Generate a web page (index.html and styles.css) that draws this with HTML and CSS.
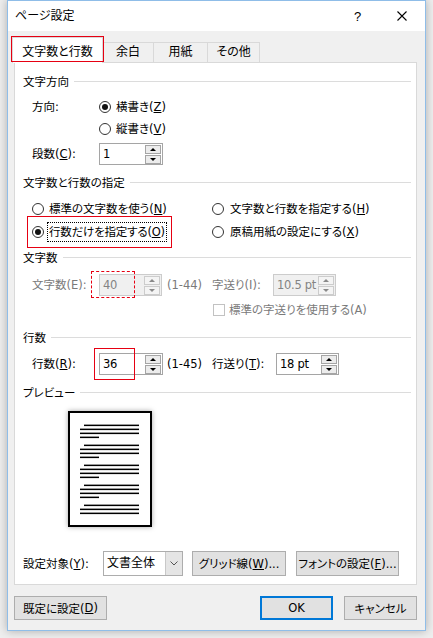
FILE: index.html
```html
<!DOCTYPE html>
<html lang="ja">
<head>
<meta charset="utf-8">
<title>ページ設定</title>
<link rel="stylesheet" href="styles.css">
</head>
<body>
<div class="window">
  <div class="titlebar">
    <span class="title">ページ設定</span>
    <span class="cap help">?</span>
    <span class="cap close"><svg width="10" height="10" viewBox="0 0 10 10"><path d="M0.5 0.5L9.5 9.5M9.5 0.5L0.5 9.5" stroke="#000" stroke-width="1.1" fill="none"/></svg></span>
  </div>
  <div class="client">
    <div class="tabs">
      <div class="tab sel w-a">文字数と行数</div>
      <div class="tab w-b">余白</div>
      <div class="tab w-c">用紙</div>
      <div class="tab w-d">その他</div>
    </div>
    <div class="panel">
      <div class="ghead g1"><span>文字方向</span><i class="rule"></i></div>
      <div class="row r-dir">
        <span class="lbl">方向:</span>
        <span class="radio on"></span><span>横書き(<u>Z</u>)</span>
      </div>
      <div class="row r-vert">
        <span class="radio"></span><span>縦書き(<u>V</u>)</span>
      </div>
      <div class="row r-cols">
        <span class="lbl">段数(<u>C</u>):</span>
        <div class="spin w64"><span class="val">1</span><span class="btns"><span class="up"></span><span class="dn"></span></span></div>
      </div>

      <div class="ghead g2"><span>文字数と行数の指定</span><i class="rule"></i></div>
      <div class="row r-opt1">
        <div class="col1"><span class="radio"></span><span>標準の文字数を使う(<u>N</u>)</span></div>
        <div class="col2"><span class="radio"></span><span>文字数と行数を指定する(<u>H</u>)</span></div>
      </div>
      <div class="row r-opt2">
        <div class="col1"><span class="radio on tight"></span><span class="focus">行数だけを指定する(<u>O</u>)</span></div>
        <div class="col2"><span class="radio"></span><span>原稿用紙の設定にする(<u>X</u>)</span></div>
      </div>

      <div class="ghead g3"><span>文字数</span><i class="rule"></i></div>
      <div class="row r-chars dis">
        <span class="lbl">文字数(E):</span>
        <div class="spin off w63"><span class="val">40</span><span class="btns"><span class="up"></span><span class="dn"></span></span></div>
        <span class="range m5">(1-44)</span>
        <span class="lbl2 w61">字送り(I):</span>
        <div class="spin off w63"><span class="val">10.5 pt</span><span class="btns"><span class="up"></span><span class="dn"></span></span></div>
      </div>
      <div class="row r-check dis">
        <span class="check"></span><span>標準の字送りを使用する(A)</span>
      </div>

      <div class="ghead g4"><span>行数</span><i class="rule"></i></div>
      <div class="row r-lines">
        <span class="lbl">行数(<u>R</u>):</span>
        <div class="spin w64"><span class="val">36</span><span class="btns"><span class="up"></span><span class="dn"></span></span></div>
        <span class="range m4">(1-45)</span>
        <span class="lbl2 w64">行送り(<u>T</u>):</span>
        <div class="spin w63"><span class="val">18 pt</span><span class="btns"><span class="up"></span><span class="dn"></span></span></div>
      </div>

      <div class="ghead g5"><span>プレビュー</span><i class="rule"></i></div>
      <div class="preview">
        <div class="page">
          <svg width="80" height="112" viewBox="0 0 80 112">
            <g fill="#000">
              <rect x="14" y="11.6" width="55" height="1.5"/>
              <rect x="10" y="15.6" width="59" height="1.5"/>
              <rect x="10" y="19.6" width="59" height="1.5"/>
              <rect x="10" y="23.6" width="19" height="1.5"/>
              <rect x="14" y="31.6" width="55" height="1.5"/>
              <rect x="10" y="35.6" width="59" height="1.5"/>
              <rect x="10" y="39.6" width="59" height="1.5"/>
              <rect x="10" y="43.6" width="19" height="1.5"/>
              <rect x="14" y="51.6" width="55" height="1.5"/>
              <rect x="10" y="55.6" width="59" height="1.5"/>
              <rect x="10" y="59.6" width="59" height="1.5"/>
              <rect x="10" y="63.6" width="19" height="1.5"/>
              <rect x="14" y="71.6" width="55" height="1.5"/>
              <rect x="10" y="75.6" width="59" height="1.5"/>
              <rect x="10" y="79.6" width="59" height="1.5"/>
              <rect x="10" y="83.6" width="19" height="1.5"/>
              <rect x="14" y="91.6" width="55" height="1.5"/>
              <rect x="10" y="95.6" width="59" height="1.5"/>
              <rect x="10" y="99.6" width="59" height="1.5"/>
            </g>
          </svg>
        </div>
      </div>

      <div class="row r-apply">
        <span class="lbl3">設定対象(<u>Y</u>):</span>
        <div class="combo"><span class="val">文書全体</span><span class="drop"><svg width="8" height="5" viewBox="0 0 8 5"><path d="M0.5 0.5L4 4L7.5 0.5" stroke="#555" stroke-width="1" fill="none"/></svg></span></div>
        <span class="btn b-grid">グリッド線(<u>W</u>)...</span>
        <span class="btn b-font">フォントの設定(<u>F</u>)...</span>
      </div>
    </div>
    <div class="footer">
      <span class="btn b-def">既定に設定(<u>D</u>)</span>
      <span class="btn b-ok">OK</span>
      <span class="btn b-cancel">キャンセル</span>
    </div>
  </div>
</div>
<div class="anno a-tab"></div>
<div class="anno a-opt"></div>
<div class="anno dashed a-chars"></div>
<div class="anno a-lines"></div>
</body>
</html>
```
FILE: styles.css
```css
* { box-sizing: border-box; }
html, body { margin: 0; padding: 0; }
body {
  position: relative;
  width: 433px;
  height: 638px;
  overflow: hidden;
  background: #eeeeee;
  font-family: "DejaVu Sans", "Noto Sans CJK JP", sans-serif;
  font-size: 11.5px;
  color: #000;
  font-feature-settings: "palt";
}
u { text-decoration: underline; text-underline-offset: 1px; text-decoration-thickness: 1px; }

.window {
  margin-left: 7px;
  width: 419px;
  height: 631px;
  border: 1px solid #8fbde8;
  background: #f0f0f0;
  display: flex;
  flex-direction: column;
  box-shadow: 0 0 9px rgba(0,0,0,0.28);
}
.titlebar {
  flex: none;
  height: 30px;
  background: #fff;
  display: flex;
  align-items: center;
  padding-left: 7px;
}
.title { flex: 1; font-size: 12px; line-height: 30px; }
.cap { width: 46px; height: 30px; display: flex; align-items: center; justify-content: center; }
.help { font-size: 13px; font-family: "Liberation Sans", "Noto Sans", sans-serif; padding-left: 3px; }

.client {
  flex: 1;
  display: flex;
  flex-direction: column;
  padding: 0 8px 0 6px;
}
.tabs {
  flex: none;
  height: 31px;
  display: flex;
  align-items: flex-end;
  position: relative;
  z-index: 1;
}
.tab {
  height: 20px;
  line-height: 18px;
  border: 1px solid #d9d9d9;
  border-bottom: none;
  text-align: center;
  margin-left: -1px;
  background: #f0f0f0;
  font-size: 12px;
}
.tab.sel {
  height: 26px;
  margin-left: -2px;
  margin-bottom: -1px;
  padding-top: 5px;
  background: #fff;
  position: relative;
  z-index: 2;
}
.w-a { width: 91px; }
.w-b { width: 52px; }
.w-c { width: 55px; }
.w-d { width: 53px; }

.panel {
  flex: none;
  width: 403px;
  height: 523px;
  border: 1px solid #d9d9d9;
  background: #fff;
  display: flex;
  flex-direction: column;
  padding: 0 5px 0 8px;
}
.ghead {
  flex: none;
  height: 20px;
  display: flex;
  align-items: center;
  line-height: 20px;
}
.rule { flex: 1; height: 1px; background: #dcdcdc; margin-left: 5px; margin-top: -2px; }
.g1 { margin-top: 9px; }
.g2 { margin-top: 8px; }
.g3 { margin-top: 6px; }
.g4 { margin-top: 8px; }
.g5 { margin-top: 8px; }

.row {
  flex: none;
  display: flex;
  align-items: center;
  padding-left: 9px;
  height: 20px;
  line-height: 20px;
  white-space: nowrap;
}
.r-dir { margin-top: 5px; }
.r-vert { margin-top: 2px; padding-left: 76px; }
.r-cols { margin-top: 4px; height: 22px; }
.r-opt1 { margin-top: 6px; }
.r-opt2 { margin-top: 3px; }
.r-chars { margin-top: 6px; height: 22px; }
.r-check { margin-top: 4px; }
.r-lines { margin-top: 5px; height: 22px; }
.r-apply { margin-top: 24px; height: 25px; padding-left: 0; }

.lbl { width: 67px; flex: none; }
.lbl2 { flex: none; }
.lbl3 { width: 80px; flex: none; }
.w61 { width: 61px; }
.w64 { width: 64px; }
.w63 { width: 63px; }
.range { width: 45px; flex: none; }
.m5 { margin-left: 5px; }
.m4 { margin-left: 4px; }

.col1 { width: 180px; display: flex; align-items: center; flex: none; }
.col2 { display: flex; align-items: center; }

.radio {
  flex: none;
  width: 12px;
  height: 12px;
  border: 1px solid #333;
  border-radius: 50%;
  background: #fff;
  margin-right: 5px;
  position: relative;
}
.radio.on::after {
  content: "";
  position: absolute;
  left: 2px;
  top: 2px;
  width: 6px;
  height: 6px;
  border-radius: 50%;
  background: #111;
}
.radio.tight { margin-right: 3px; }
.col2 .radio { margin-right: 6px; }
.focus {
  height: 20px;
  line-height: 18px;
  border: 1px dotted #000;
  padding: 0 1px;
  letter-spacing: -0.2px;
}

.dis { color: #7a7a7a; }
.check {
  flex: none;
  width: 12px;
  height: 12px;
  border: 1px solid #c2c2c2;
  background: #fff;
  margin-left: 181px;
  margin-right: 4px;
}

.spin {
  flex: none;
  height: 22px;
  display: flex;
  border: 1px solid #a5a5a5;
  background: #fff;
  color: #000;
}
.spin .val {
  flex: 1;
  min-width: 0;
  overflow: hidden;
  padding-left: 3px;
  line-height: 20px;
  letter-spacing: -0.3px;
}
.spin .btns {
  flex: none;
  width: 16px;
  display: flex;
  flex-direction: column;
  justify-content: center;
  gap: 1px;
  margin-right: 1px;
}
.spin .up, .spin .dn {
  position: relative;
  height: 9px;
  border: 1px solid #a5a5a5;
  background: #ececec;
}
.spin .up::after, .spin .dn::after {
  content: "";
  position: absolute;
  left: 4px;
  width: 0;
  height: 0;
  border-left: 3px solid transparent;
  border-right: 3px solid transparent;
}
.spin .up::after { top: 2px; border-bottom: 3px solid #000; }
.spin .dn::after { top: 2px; border-top: 3px solid #000; }
.spin.off { border-color: #cccccc; background: #f0f0f0; color: #838383; }
.spin.off .up, .spin.off .dn { border-color: #cccccc; background: #f4f4f4; }
.spin.off .up::after { border-bottom-color: #8a8a8a; }
.spin.off .dn::after { border-top-color: #8a8a8a; }

.preview { flex: none; margin-top: 8px; padding-left: 45px; }
.page {
  width: 84px;
  height: 116px;
  border: 2px solid #000;
  background: #fff;
  box-shadow: 0 0 5px rgba(0,0,0,0.35);
}
.page svg { display: block; }

.combo {
  flex: none;
  width: 80px;
  height: 25px;
  border: 1px solid #adadad;
  background: #fff;
  display: flex;
}
.combo .val { flex: 1; padding-left: 3px; line-height: 23px; font-size: 12px; }
.combo .drop {
  width: 17px;
  background: #e5e5e5;
  border-left: 1px solid #c8c8c8;
  display: flex;
  align-items: center;
  justify-content: center;
}

.btn {
  flex: none;
  display: flex;
  align-items: center;
  justify-content: center;
  height: 25px;
  border: 1px solid #adadad;
  background: #e1e1e1;
  white-space: nowrap;
}
.b-grid { width: 94px; margin-left: 9px; }
.b-font { width: 103px; margin-left: 10px; }

.footer {
  flex: none;
  display: flex;
  padding-top: 11px;
}
.footer .btn { height: 24px; }
.b-def { width: 93px; }
.b-ok { width: 73px; margin-left: auto; border: 2px solid #0078d7; }
.b-cancel { width: 73px; margin-left: 11px; }

.anno {
  position: absolute;
  border: 1px solid #e60012;
  pointer-events: none;
  z-index: 5;
}
.anno.dashed { border-style: dashed; }
.a-tab { left: 11px; top: 36px; width: 93px; height: 26px; }
.a-opt { left: 27px; top: 216px; width: 145px; height: 32px; }
.a-chars { left: 91px; top: 271px; width: 44px; height: 27px; }
.a-lines { left: 94px; top: 348px; width: 41px; height: 32px; }
```
